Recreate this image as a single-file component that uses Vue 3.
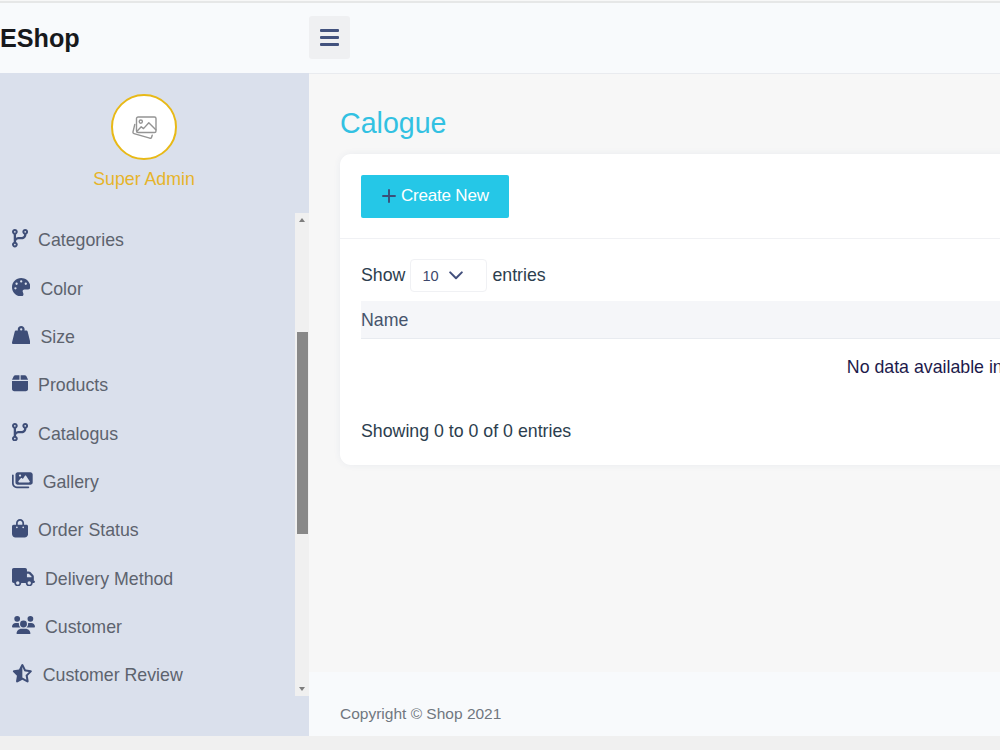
<template>
  <div class="page">
    <!-- Top bar -->
    <header class="topbar">
      <div class="brand">EShop</div>
      <button class="toggle" type="button">
        <span></span>
        <span></span>
        <span></span>
      </button>
    </header>

    <div class="body">
      <!-- Sidebar -->
      <aside class="sidebar">
        <div class="profile">
          <div class="avatar">
            <svg width="25" height="24" viewBox="0 0 25 24" fill="none" stroke="#949494" stroke-width="1.4" stroke-linejoin="round" stroke-linecap="round">
              <rect x="4.5" y="1" width="19.5" height="15.5" rx="1.6" />
              <circle cx="8.8" cy="5.6" r="1.6" />
              <path d="M5 15.2l4.2-4.4 2.3 1.8 5.3-5.8 7 7M2.8 8.4L1 15.8q-.3 1.4 1 1.8l15.8 4.6q1.4.3 1.8-1l.6-2" />
            </svg>
          </div>
          <div class="role">Super Admin</div>
        </div>
        <div class="menu-wrap">
          <nav class="menu">
            <a v-for="item in menu" :key="item.label" class="menu-item">
              <svg class="icon" :viewBox="icons[item.icon].box" :style="{ width: icons[item.icon].width + 'px' }">
                <path :d="icons[item.icon].path" />
              </svg>
              <span>{{ item.label }}</span>
            </a>
          </nav>
          <div class="scrollbar">
            <i class="arrow up"></i>
            <div class="track">
              <div class="thumb"></div>
            </div>
            <i class="arrow down"></i>
          </div>
        </div>
      </aside>

      <!-- Main content -->
      <div class="content">
        <main class="main">
          <h1>Calogue</h1>
          <section class="card">
            <div class="card-header">
              <button class="create" type="button">
                <svg width="14" height="14" viewBox="0 0 14 14">
                  <path d="M7 1v12M1 7h12" stroke="#3b4e78" stroke-width="1.9" stroke-linecap="round" />
                </svg>
                <span>Create New</span>
              </button>
            </div>
            <div class="card-body">
              <div class="length">
                <span>Show</span>
                <div class="select">
                  <span>10</span>
                  <svg width="14" height="9" viewBox="0 0 14 9">
                    <path d="M1.2 1.4L7 7.2l5.8-5.8" fill="none" stroke="#424f7c" stroke-width="2" stroke-linecap="round" stroke-linejoin="round" />
                  </svg>
                </div>
                <span>entries</span>
              </div>
              <div class="thead">Name</div>
              <div class="empty">No data available in table</div>
              <div class="info">Showing 0 to 0 of 0 entries</div>
            </div>
          </section>
        </main>
        <footer class="footer">Copyright © Shop 2021</footer>
      </div>
    </div>
  </div>
</template>

<script setup>
const icons = {
  branch: {
    box: '0 0 448 512',
    width: 16.1,
    path: 'M80 104a24 24 0 1 0 0-48 24 24 0 1 0 0 48zm80-24c0 32.8-19.7 61-48 73.3v87.8c18.8-10.9 40.7-17.1 64-17.1h96c35.3 0 64-28.7 64-64v-6.7C307.7 141 288 112.8 288 80c0-44.2 35.8-80 80-80s80 35.8 80 80c0 32.8-19.7 61-48 73.3V160c0 70.7-57.3 128-128 128H176c-35.3 0-64 28.7-64 64v6.7c28.3 12.3 48 40.5 48 73.3c0 44.2-35.8 80-80 80s-80-35.8-80-80c0-32.8 19.7-61 48-73.3V352 153.3C19.7 141 0 112.8 0 80C0 35.8 35.8 0 80 0s80 35.8 80 80zm232 0a24 24 0 1 0 -48 0 24 24 0 1 0 48 0zM80 456a24 24 0 1 0 0-48 24 24 0 1 0 0 48z'
  },
  palette: {
    box: '0 0 512 512',
    width: 18.4,
    path: 'M512 256c0 .9 0 1.8 0 2.7c-.4 36.5-33.6 61.3-70.1 61.3H344c-26.5 0-48 21.5-48 48c0 3.4 .4 6.7 1 9.9c2.1 10.2 6.5 20 10.8 29.9c6.1 13.8 12.1 27.5 12.1 42c0 31.8-21.6 60.7-53.4 62c-3.5 .1-7 .2-10.6 .2C114.6 512 0 397.4 0 256S114.6 0 256 0S512 114.6 512 256zM128 288a32 32 0 1 0 -64 0 32 32 0 1 0 64 0zm0-96a32 32 0 1 0 0-64 32 32 0 1 0 0 64zM288 96a32 32 0 1 0 -64 0 32 32 0 1 0 64 0zm96 96a32 32 0 1 0 0-64 32 32 0 1 0 0 64z'
  },
  weight: {
    box: '0 0 512 512',
    width: 18.4,
    path: 'M224 96a32 32 0 1 1 64 0 32 32 0 1 1 -64 0zm122.5 32c3.5-10 5.5-20.8 5.5-32c0-53-43-96-96-96s-96 43-96 96c0 11.2 1.9 22 5.5 32H120c-22 0-41.2 15-46.6 36.4l-72 288c-3.6 14.3-.4 29.5 8.7 41.2S33.2 512 48 512H464c14.8 0 28.7-6.8 37.8-18.5s12.3-26.8 8.7-41.2l-72-288C433.2 143 414 128 392 128H346.5z'
  },
  box: {
    box: '0 0 448 512',
    width: 16.1,
    path: 'M50.7 58.5L0 160H208V32H93.7C75.5 32 58.9 42.3 50.7 58.5zM240 160H448L397.3 58.5C389.1 42.3 372.5 32 354.3 32H240V160zm208 32H0V416c0 35.3 28.7 64 64 64H384c35.3 0 64-28.7 64-64V192z'
  },
  images: {
    box: '0 0 576 512',
    width: 20.7,
    path: 'M160 32c-35.3 0-64 28.7-64 64V320c0 35.3 28.7 64 64 64H512c35.3 0 64-28.7 64-64V96c0-35.3-28.7-64-64-64H160zM396 138.7l96 144c4.9 7.4 5.4 16.8 1.2 24.6S480.9 320 472 320H328 280 200c-9.2 0-17.6-5.3-21.6-13.6s-2.9-18.2 2.9-25.4l64-80c4.6-5.7 11.4-9 18.7-9s14.2 3.3 18.7 9l17.3 21.6 56-84C360.5 132 368 128 376 128s15.5 4 20 10.7zM192 128a32 32 0 1 1 64 0 32 32 0 1 1 -64 0zM48 120c0-13.3-10.7-24-24-24S0 106.7 0 120V344c0 75.1 60.9 136 136 136H456c13.3 0 24-10.7 24-24s-10.7-24-24-24H136c-48.6 0-88-39.4-88-88V120z'
  },
  bag: {
    box: '0 0 448 512',
    width: 16.1,
    path: 'M160 112c0-35.3 28.7-64 64-64s64 28.7 64 64v48H160V112zm-48 48H48c-26.5 0-48 21.5-48 48V416c0 53 43 96 96 96H352c53 0 96-43 96-96V208c0-26.5-21.5-48-48-48H336V112C336 50.1 285.9 0 224 0S112 50.1 112 112v48zm24 48a24 24 0 1 1 0 48 24 24 0 1 1 0-48zm152 24a24 24 0 1 1 48 0 24 24 0 1 1 -48 0z'
  },
  truck: {
    box: '0 0 640 512',
    width: 23,
    path: 'M48 0C21.5 0 0 21.5 0 48V368c0 26.5 21.5 48 48 48H64c0 53 43 96 96 96s96-43 96-96H384c0 53 43 96 96 96s96-43 96-96h32c17.7 0 32-14.3 32-32s-14.3-32-32-32V288 256 237.3c0-17-6.7-33.3-18.7-45.3L512 114.7c-12-12-28.3-18.7-45.3-18.7H416V48c0-26.5-21.5-48-48-48H48zM416 160h50.7L544 237.3V256H416V160zM112 416a48 48 0 1 1 96 0 48 48 0 1 1 -96 0zm368-48a48 48 0 1 1 0 96 48 48 0 1 1 0-96z'
  },
  users: {
    box: '0 0 640 512',
    width: 23,
    path: 'M144 0a80 80 0 1 1 0 160A80 80 0 1 1 144 0zM512 0a80 80 0 1 1 0 160A80 80 0 1 1 512 0zM0 298.7C0 239.8 47.8 192 106.7 192h42.7c15.9 0 31 3.5 44.6 9.7c-1.3 7.2-1.9 14.7-1.9 22.3c0 38.2 16.8 72.5 43.3 96c-.2 0-.4 0-.7 0H21.3C9.6 320 0 310.4 0 298.7zM405.3 320c-.2 0-.4 0-.7 0c26.6-23.5 43.3-57.8 43.3-96c0-7.6-.7-15-1.9-22.3c13.6-6.3 28.7-9.7 44.6-9.7h42.7C592.2 192 640 239.8 640 298.7c0 11.8-9.6 21.3-21.3 21.3H405.3zM224 224a96 96 0 1 1 192 0 96 96 0 1 1 -192 0zM128 485.3C128 411.7 187.7 352 261.3 352H378.7C452.3 352 512 411.7 512 485.3c0 14.7-11.9 26.7-26.7 26.7H154.7c-14.7 0-26.7-11.9-26.7-26.7z'
  },
  star: {
    box: '32 0 576 512',
    width: 20.7,
    path: 'M320 376.4l.1-.1 26.4 14.1 85.2 45.5-16.5-97.6-4.8-28.7 20.7-20.5 70.1-69.3-96.1-14.2-29.3-4.3-12.9-26.6L320.1 86.9l-.1 .3V376.4zm175.1 98.3c2 12-3 24.2-12.9 31.3s-23 8-33.8 2.3L320.1 439.8 191.8 508.3C181 514 167.9 513.1 158 506s-14.9-19.3-12.9-31.3L169.8 329 65.6 225.9c-8.6-8.5-11.7-21.2-7.9-32.7s13.7-19.9 25.7-21.7L227 150.3 291.4 18c5.4-11 16.5-18 28.8-18s23.4 7 28.8 18l64.3 132.3 143.6 21.2c12 1.8 22 10.2 25.7 21.7s.7 24.2-7.9 32.7L470.5 329l24.6 145.7z'
  }
}

const menu = [
  { label: 'Categories', icon: 'branch' },
  { label: 'Color', icon: 'palette' },
  { label: 'Size', icon: 'weight' },
  { label: 'Products', icon: 'box' },
  { label: 'Catalogus', icon: 'branch' },
  { label: 'Gallery', icon: 'images' },
  { label: 'Order Status', icon: 'bag' },
  { label: 'Delivery Method', icon: 'truck' },
  { label: 'Customer', icon: 'users' },
  { label: 'Customer Review', icon: 'star' }
]
</script>

<style>
body {
  margin: 0;
  overflow: hidden;
}
</style>

<style scoped>
.page {
  display: flex;
  flex-direction: column;
  box-sizing: border-box;
  width: 1000px;
  height: 750px;
  overflow: hidden;
  border-bottom: 14px solid #f0f0f0;
  background: #f7f7f7;
  font-family: "Liberation Sans", Arial, sans-serif;
  font-size: 17.75px;
  color: #2c3e4e;
}

.topbar {
  display: flex;
  flex: none;
  align-items: center;
  box-sizing: border-box;
  height: 73px;
  margin: 1px 0 -1px;
  border-top: 2px solid #e6e7e7;
  border-bottom: 1px solid #e9ebef;
  background: #f8fafc;
}

.brand {
  width: 309px;
  font-size: 25.2px;
  font-weight: bold;
  color: #17191c;
}

.toggle {
  display: flex;
  flex-direction: column;
  align-items: center;
  justify-content: center;
  gap: 4px;
  width: 41px;
  height: 43px;
  margin-top: -1px;
  padding: 0;
  border: 0;
  border-radius: 3px;
  background: #eff0f2;
}

.toggle span {
  width: 19px;
  height: 2.8px;
  border-radius: 1px;
  background: #42527e;
}

.body {
  display: flex;
  flex: 1;
  min-height: 0;
}

.sidebar {
  display: flex;
  flex: none;
  flex-direction: column;
  width: 309px;
  background: #dae0ec;
}

.profile {
  display: flex;
  flex-direction: column;
  align-items: center;
  box-sizing: border-box;
  width: 288px;
  height: 140px;
  padding-top: 21px;
}

.avatar {
  display: flex;
  align-items: center;
  justify-content: center;
  box-sizing: border-box;
  width: 66px;
  height: 66px;
  padding: 2px 0 0 1px;
  border: 2.5px solid #e8b917;
  border-radius: 50%;
  background: #fff;
}

.role {
  margin-top: 9px;
  line-height: 20px;
  color: #e6b42a;
}

.menu-wrap {
  display: flex;
  height: 483px;
}

.menu {
  flex: 1;
  padding: 3.8px 0 0 12px;
  overflow: hidden;
}

.menu-item {
  display: flex;
  align-items: center;
  gap: 10px;
  height: 48.33px;
  color: #5d636e;
}

.icon {
  height: 18.4px;
  margin-bottom: 5px;
  fill: #3e4e78;
}

.scrollbar {
  display: flex;
  flex-direction: column;
  align-items: center;
  width: 14px;
  background: #f0f0f0;
}

.track {
  flex: 1;
  padding-top: 105px;
}

.thumb {
  width: 11px;
  height: 202px;
  background: #888;
}

.arrow {
  height: 0;
  border: 3.5px solid transparent;
}

.up {
  margin: 2px 0 5px;
  border-bottom: 4px solid #7d7d7d;
}

.down {
  margin-bottom: 2px;
  border-top: 4px solid #7d7d7d;
}

.content {
  display: flex;
  flex: 1;
  flex-direction: column;
  min-width: 0;
}

.main {
  flex: 1;
  padding: 33px 0 0 31px;
  overflow: hidden;
}

h1 {
  margin: 0 0 14px;
  font-size: 28.6px;
  font-weight: normal;
  line-height: 34px;
  color: #32c1e2;
}

.card {
  width: 1213px;
  height: 311px;
  border-radius: 11px;
  background: #fff;
  box-shadow: 0 0 7px rgba(60, 90, 140, 0.07);
}

.card-header {
  padding: 21px 21px 20px;
  border-bottom: 1px solid #f0f1f4;
}

.create {
  display: flex;
  align-items: center;
  gap: 5px;
  width: 148px;
  height: 43px;
  padding: 0 0 1px 21px;
  border: 0;
  border-radius: 2px;
  background: #25c7e7;
  font: 17px "Liberation Sans", Arial, sans-serif;
  letter-spacing: -0.2px;
  color: #fff;
}

.card-body {
  padding: 20px 21px 0;
}

.length {
  display: flex;
  align-items: center;
  gap: 5px;
  height: 33px;
}

.select {
  display: flex;
  align-items: center;
  gap: 10px;
  box-sizing: border-box;
  width: 77px;
  height: 33px;
  padding-left: 11px;
  border: 1px solid #f0f1f4;
  border-radius: 4px;
  font-size: 14.6px;
  color: #3e486b;
}

.thead {
  height: 37px;
  margin-top: 9px;
  border-bottom: 1px solid #e8ebf0;
  background: #f5f6f9;
  line-height: 38px;
  color: #46546c;
}

.empty {
  height: 57px;
  line-height: 57px;
  text-align: center;
  color: #1d1a4b;
}

.info {
  margin-top: 24px;
  line-height: 22px;
}

.footer {
  box-sizing: border-box;
  height: 64px;
  padding: 33px 0 0 31px;
  background: #f8fafc;
  font-size: 15.5px;
  color: #707780;
}
</style>
